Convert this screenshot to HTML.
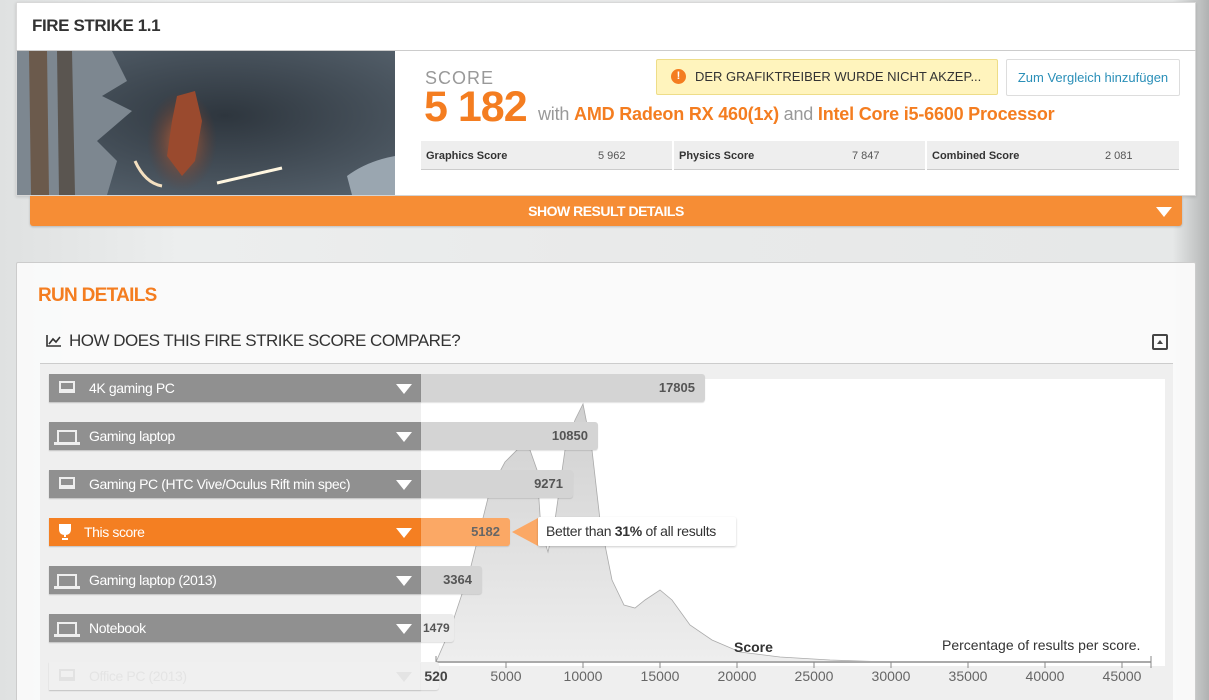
<!DOCTYPE html>
<html><head><meta charset="utf-8"><style>
*{box-sizing:border-box;margin:0;padding:0}
html,body{width:1209px;height:700px;overflow:hidden}
body{position:relative;font-family:"Liberation Sans",sans-serif;
background:linear-gradient(90deg,#dfe1e1 0%,#eceeee 15%,#e9eaea 50%,#e6e8e8 97%,#c4c6c6 99%,#b0b2b2 100%);}
.abs{position:absolute}
.card1{left:16px;top:2px;width:1180px;height:194px;background:#fff;border:1px solid #d8d8d8;box-shadow:0 1px 3px rgba(0,0,0,.15)}
.title{left:32px;top:16px;font-size:17px;font-weight:bold;color:#333;letter-spacing:-0.4px}
.hr1{left:16px;top:50px;width:1180px;height:1px;background:#ccc}
.img{left:17px;top:51px;width:378px;height:144px;overflow:hidden;background:#3e4852}
.orange{left:30px;top:196px;width:1152px;height:30px;background:#f68d35;border-radius:0 0 3px 3px;box-shadow:0 1px 2px rgba(0,0,0,.2);color:#fff;font-weight:bold;font-size:14px;text-align:center;line-height:30px;letter-spacing:-0.5px;z-index:2}
.tri{width:0;height:0;border-left:8px solid transparent;border-right:8px solid transparent;border-top:10px solid #fff}
.card2{left:16px;top:262px;width:1180px;height:440px;background:rgba(250,250,250,.97);border:1px solid #ccc;border-bottom:none;border-radius:2px}
.row{position:absolute;left:49px;width:372px;height:28px;background:#909090;color:#fff;font-size:14px;line-height:28px;box-shadow:0 1px 1px rgba(0,0,0,.2)}
.row span{position:absolute;left:40px;letter-spacing:-0.4px}
.row .tri{position:absolute;right:9px;top:10px}
.val{position:absolute;left:421px;height:28px;background:#d4d4d4;color:#555;font-weight:bold;font-size:13px;line-height:28px;text-align:right;padding-right:10px;border-radius:0 3px 3px 0;box-shadow:0 1px 1px rgba(0,0,0,.12)}
.ico{position:absolute;left:10px;top:7px;width:16px;height:12px;border:2px solid #eee;border-bottom-width:4px}
.lap{position:absolute;left:8px;top:8px;width:20px;height:12px;border:2px solid #eee;border-bottom:none}
.lap:after{content:"";position:absolute;left:-5px;bottom:-3px;width:26px;height:3px;background:#eee}
.ax{position:absolute;top:668px;font-size:14px;color:#666;transform:translateX(-50%);z-index:5}
</style></head><body>
<div class="abs card1"></div>
<div class="abs title">FIRE STRIKE 1.1</div>
<div class="abs hr1"></div>
<div class="abs img">
<svg width="378" height="144">
<defs><radialGradient id="bg" cx="0.55" cy="0.45" r="0.7"><stop offset="0" stop-color="#2e363e"/><stop offset="1" stop-color="#56626d"/></radialGradient>
<radialGradient id="g1" cx="0.5" cy="0.5" r="0.5"><stop offset="0" stop-color="#c0643a"/><stop offset="1" stop-color="#6a3a2a" stop-opacity="0"/></radialGradient></defs>
<rect width="378" height="144" fill="url(#bg)"/>
<path d="M0 0 L95 0 L110 30 L85 45 L115 60 L80 90 L100 110 L90 144 L0 144Z" fill="#7d8790"/>
<path d="M12 0 L30 0 L32 144 L14 144Z" fill="#6b5a4c"/>
<path d="M40 0 L55 0 L58 144 L42 144Z" fill="#5a5550"/>
<ellipse cx="165" cy="90" rx="35" ry="50" fill="url(#g1)"/>
<path d="M160 45 L178 40 L185 70 L178 110 L165 125 L150 105 L155 70Z" fill="#9a4a2e"/>
<path d="M118 110 Q128 132 145 135" stroke="#f4e0c0" stroke-width="3" fill="none"/>
<path d="M200 132 L265 117" stroke="#fff6e0" stroke-width="3"/>
<path d="M330 125 Q350 110 378 105 L378 144 L335 144Z" fill="#9aa6b0"/>
</svg></div>
<div class="abs" style="left:425px;top:68px;font-size:18px;color:#999;letter-spacing:1px">SCORE</div>
<div class="abs" style="left:424px;top:83px;font-size:43px;font-weight:bold;color:#f47d20;letter-spacing:-1px">5 182</div>
<div class="abs" style="left:538px;top:104px;font-size:18px;color:#999;white-space:nowrap;letter-spacing:-0.2px">with <b style="color:#f47d20">AMD Radeon RX 460(1x)</b> and <b style="color:#f47d20">Intel Core i5-6600 Processor</b></div>
<div class="abs" style="left:656px;top:59px;width:342px;height:36px;background:#fff4bd;border:1px solid #eedd88;border-radius:2px;font-size:13px;color:#333;line-height:34px;padding-left:38px">DER GRAFIKTREIBER WURDE NICHT AKZEP...</div>
<div class="abs" style="left:671px;top:69px;width:15px;height:15px;border-radius:50%;background:#f47d20;color:#fff;font-size:11px;font-weight:bold;text-align:center;line-height:15px">!</div>
<div class="abs" style="left:1006px;top:59px;width:174px;height:37px;background:#fff;border:1px solid #ddd;border-radius:2px;font-size:13px;color:#2a8fb8;line-height:35px;text-align:center">Zum Vergleich hinzufügen</div>
<div class="abs" style="left:421px;top:141px;width:758px;height:29px;background:#eee;border-bottom:1px solid #ccc"></div>
<div class="abs" style="left:672px;top:141px;width:2px;height:29px;background:#fff"></div>
<div class="abs" style="left:925px;top:141px;width:2px;height:29px;background:#fff"></div>
<div class="abs" style="left:426px;top:150px;font-size:11px;font-weight:bold;color:#333">Graphics Score</div>
<div class="abs" style="left:598px;top:150px;font-size:11px;color:#555">5 962</div>
<div class="abs" style="left:679px;top:150px;font-size:11px;font-weight:bold;color:#333">Physics Score</div>
<div class="abs" style="left:852px;top:150px;font-size:11px;color:#555">7 847</div>
<div class="abs" style="left:932px;top:150px;font-size:11px;font-weight:bold;color:#333">Combined Score</div>
<div class="abs" style="left:1105px;top:150px;font-size:11px;color:#555">2 081</div>
<div class="abs orange">SHOW RESULT DETAILS<div class="tri abs" style="right:10px;top:11px"></div></div>

<div class="abs card2"></div>
<div class="abs" style="left:38px;top:285px;font-size:19px;font-weight:bold;color:#f47d20;letter-spacing:-0.7px">RUN DETAILS</div>
<svg class="abs" style="left:46px;top:334px" width="16" height="14"><path d="M1 1V12H15M3 10L7 5L10 8L14 3" stroke="#333" stroke-width="1.6" fill="none"/></svg>
<div class="abs" style="left:69px;top:331px;font-size:17px;color:#333;letter-spacing:-0.5px">HOW DOES THIS FIRE STRIKE SCORE COMPARE?</div>
<div class="abs" style="left:1152px;top:334px;width:16px;height:16px;border:2px solid #444;border-radius:2px"><div class="abs" style="left:3px;top:4px;border-left:3px solid transparent;border-right:3px solid transparent;border-bottom:4px solid #444"></div></div>
<div class="abs" style="left:40px;top:363px;width:1133px;height:340px;background:#efefef;border-top:1px solid #ccc"></div>
<div class="abs" style="left:421px;top:379px;width:744px;height:287px;background:#fff"></div>
<svg class="abs" style="left:0;top:0" width="1209" height="700">
<defs><linearGradient id="cg" x1="0" y1="0" x2="0" y2="1"><stop offset="0" stop-color="#d0d0d0"/><stop offset="1" stop-color="#eeeeee"/></linearGradient></defs>
<path d="M436 662 L450 630 L470 570 L490 490 L505 462 L520 447 L530 450 L537 470 L541 530 L548 552 L555 520 L565 450 L575 420 L583 404 L592 450 L600 520 L612 580 L624 605 L635 608 L645 600 L660 590 L672 600 L690 625 L712 640 L740 652 L780 657 L830 660 L890 662 Z" fill="url(#cg)" stroke="#aaa" stroke-width="0.8"/>
<line x1="436" y1="662" x2="1151" y2="662" stroke="#aaa" stroke-width="2"/>
<g stroke="#888" stroke-width="1"><line x1="436" y1="656" x2="436" y2="668"/><line x1="506" y1="662" x2="506" y2="668"/><line x1="583" y1="662" x2="583" y2="668"/><line x1="660" y1="662" x2="660" y2="668"/><line x1="737" y1="662" x2="737" y2="668"/><line x1="814" y1="662" x2="814" y2="668"/><line x1="891" y1="662" x2="891" y2="668"/><line x1="968" y1="662" x2="968" y2="668"/><line x1="1045" y1="662" x2="1045" y2="668"/><line x1="1122" y1="662" x2="1122" y2="668"/><line x1="1151" y1="656" x2="1151" y2="668"/></g>
</svg>
<div class="abs" style="left:734px;top:639px;font-size:14px;font-weight:bold;color:#333">Score</div>
<div class="abs" style="left:942px;top:637px;font-size:14px;color:#333">Percentage of results per score.</div>

<div class="row" style="top:374px"><div class="ico"></div><span>4K gaming PC</span><div class="tri"></div></div>
<div class="val" style="top:374px;width:284px">17805</div>
<div class="row" style="top:422px"><div class="lap"></div><span>Gaming laptop</span><div class="tri"></div></div>
<div class="val" style="top:422px;width:177px">10850</div>
<div class="row" style="top:470px"><div class="ico"></div><span>Gaming PC (HTC Vive/Oculus Rift min spec)</span><div class="tri"></div></div>
<div class="val" style="top:470px;width:152px">9271</div>
<div class="row" style="top:518px;background:#f47f22"><svg class="abs" style="left:10px;top:6px" width="12" height="16"><path d="M1 1H11V5Q11 10 6 10Q1 10 1 5Z M6 10V13 M3 15H9" stroke="#fff" stroke-width="2" fill="#fff"/></svg><span style="left:35px">This score</span><div class="tri"></div></div>
<div class="val" style="top:518px;width:89px;background:#fba865;color:#666">5182</div>
<div class="abs" style="left:512px;top:518px;border-top:14px solid transparent;border-bottom:14px solid transparent;border-right:26px solid #fba865"></div>
<div class="abs" style="left:538px;top:517px;width:198px;height:29px;background:#fff;border-radius:2px;box-shadow:0 1px 2px rgba(0,0,0,.2);font-size:14px;color:#333;line-height:29px;padding-left:8px;letter-spacing:-0.3px">Better than <b>31%</b> of all results</div>
<div class="row" style="top:566px"><div class="lap"></div><span>Gaming laptop (2013)</span><div class="tri"></div></div>
<div class="val" style="top:566px;width:61px">3364</div>
<div class="row" style="top:614px"><div class="lap"></div><span>Notebook</span><div class="tri"></div></div>
<div class="val" style="top:614px;width:33px;background:#ececec;padding:0 0 0 2px;text-align:left;font-size:12px">1479</div>
<div class="row" style="top:662px;background:#f0f0f0;color:#e4e4e4"><div class="ico" style="border-color:#e2e2e2"></div><span>Office PC (2013)</span><div class="tri" style="border-top-color:#e4e4e4"></div></div>
<div class="val" style="top:662px;width:18px;background:#f0f0f0"></div>
<div class="ax" style="left:436px;font-weight:bold;color:#444">520</div>
<div class="ax" style="left:506px">5000</div><div class="ax" style="left:583px">10000</div><div class="ax" style="left:660px">15000</div><div class="ax" style="left:737px">20000</div><div class="ax" style="left:814px">25000</div><div class="ax" style="left:891px">30000</div><div class="ax" style="left:968px">35000</div><div class="ax" style="left:1045px">40000</div><div class="ax" style="left:1122px">45000</div>
</body></html>
